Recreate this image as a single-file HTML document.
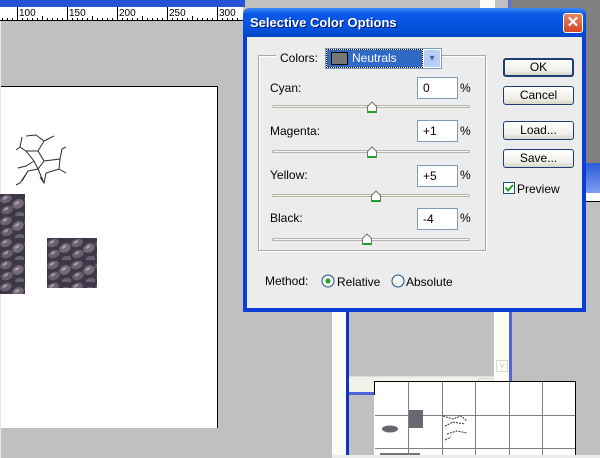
<!DOCTYPE html>
<html><head><style>
*{margin:0;padding:0;box-sizing:border-box}
body{width:600px;height:458px;overflow:hidden;background:#c0c0c0;position:relative;font-family:"Liberation Sans",Tahoma,sans-serif;font-size:12px;color:#000}
.a{position:absolute}
.btn{position:absolute;width:71px;height:19px;border:1px solid #1d3e74;border-radius:3px;background:linear-gradient(#fff,#f0efe8 70%,#d8d5c8);text-align:center;line-height:17px;font-size:12px}
.inp{position:absolute;width:41px;height:22px;border:1px solid #7f9db9;background:#fff;padding-left:5px;line-height:20px}
.trk{position:absolute;left:272px;width:198px;height:3px;border:1px solid #b5b4a8;background:#f4f3ee;border-radius:2px}
.lbl{position:absolute;font-size:12px}
</style></head><body>
<svg width="0" height="0" style="position:absolute"><defs>
<pattern id="cob" width="24" height="22" patternUnits="userSpaceOnUse">
<rect width="24" height="22" fill="#3c3848"/>
<ellipse cx="6" cy="5" rx="6" ry="4" fill="#6a6270" transform="rotate(-20 6 5)"/>
<ellipse cx="18" cy="10" rx="6" ry="4.5" fill="#736a75" transform="rotate(-25 18 10)"/>
<ellipse cx="7" cy="16" rx="6" ry="4" fill="#665e6a" transform="rotate(-20 7 16)"/>
<ellipse cx="20" cy="21" rx="5" ry="3" fill="#6a6270"/>
<ellipse cx="5" cy="4" rx="2.5" ry="1.2" fill="#a89ea8" transform="rotate(-30 5 4)"/>
<ellipse cx="17" cy="9" rx="2.5" ry="1.2" fill="#aca2ac" transform="rotate(-30 17 9)"/>
<ellipse cx="6" cy="15" rx="2.5" ry="1.2" fill="#a49aa4" transform="rotate(-30 6 15)"/>
</pattern></defs></svg>
<!-- top bar & ruler -->
<div class="a" style="left:0;top:0;width:245px;height:7px;background:#2453d6"></div>
<div class="a" style="left:480px;top:0;width:15px;height:8px;background:#fbfbf6"></div>
<div class="a" style="left:508px;top:0;width:3px;height:8px;background:#5a6fd8"></div>
<div class="a" style="left:511px;top:0;width:89px;height:163px;background:#808080"></div>
<div class="a" style="left:586px;top:163px;width:14px;height:30px;background:linear-gradient(#2a5bd8,#7f9ef0)"></div>
<div class="a" style="left:586px;top:193px;width:14px;height:9px;background:#fff;border-bottom:1px solid #000"></div>
<div class="a" style="left:0;top:7px;width:243px;height:14px;background:#fff;border-bottom:1px solid #000"></div>
<svg class="a" style="left:0;top:7px" width="243" height="14">
<g stroke="#000" stroke-width="1">
<path d="M17.5 0V14M67.5 0V14M117.5 0V14M167.5 0V14M217.5 0V14"/>
<path d="M2.5 11V14M7.5 11V14M12.5 11V14M22.5 11V14M27.5 11V14M32.5 11V14M37.5 11V14M42.5 9V14M47.5 11V14M52.5 11V14M57.5 11V14M62.5 11V14M72.5 11V14M77.5 11V14M82.5 11V14M87.5 11V14M92.5 9V14M97.5 11V14M102.5 11V14M107.5 11V14M112.5 11V14M122.5 11V14M127.5 11V14M132.5 11V14M137.5 11V14M142.5 9V14M147.5 11V14M152.5 11V14M157.5 11V14M162.5 11V14M172.5 11V14M177.5 11V14M182.5 11V14M187.5 11V14M192.5 9V14M197.5 11V14M202.5 11V14M207.5 11V14M212.5 11V14M222.5 11V14M227.5 11V14M232.5 11V14M237.5 11V14"/>
</g>
<g font-size="10" font-family="Liberation Sans,sans-serif"><text x="19" y="9">100</text><text x="69" y="9">150</text><text x="119" y="9">200</text><text x="169" y="9">250</text><text x="219" y="9">300</text></g>
</svg>
<!-- canvas -->
<div class="a" style="left:0;top:86px;width:218px;height:342px;background:#fff;border-top:1px solid #000;border-right:1px solid #000"></div>
<div class="a" style="left:0;top:21px;width:1px;height:437px;background:#e8e8e8"></div>
<svg class="a" style="left:14px;top:133px" width="52" height="56" fill="none" stroke="#2a2a3a" stroke-width="1">
<path d="M12 3L22 2L30 8L40 3M30 8L24 18L12 18L6 14M24 18L30 28L24 36L14 38L8 48M30 28L46 26L48 16L52 14M46 26L45 36L52 40M45 36L32 40L30 50L26 44M24 36L30 50M12 18L20 28L24 36M2 17L6 14L8 4M20 28L12 33L4 35M14 38L6 50L2 52"/>
</svg>
<svg class="a" style="left:0;top:194px" width="25" height="100"><rect width="25" height="100" fill="url(#cob)"/></svg>
<svg class="a" style="left:47px;top:238px" width="50" height="50"><rect width="50" height="50" fill="url(#cob)"/></svg>
<!-- window behind below dialog -->
<div class="a" style="left:332px;top:300px;width:14px;height:158px;background:#fcfcf6"></div>
<div class="a" style="left:346px;top:300px;width:3px;height:158px;background:#1030c8"></div>
<div class="a" style="left:349px;top:376px;width:160px;height:16px;background:#f3f2ea;border-top:1px solid #ddd"></div>
<div class="a" style="left:494px;top:300px;width:15px;height:92px;background:#fcfcf4"></div>
<div class="a" style="left:496px;top:360px;width:12px;height:12px;border:1px solid #d8d8d0;color:#ccc;font-size:8px;text-align:center;line-height:10px">∨</div>
<div class="a" style="left:478px;top:378px;width:15px;height:12px;border:1px solid #d8d8d0;color:#ccc;font-size:8px;text-align:center;line-height:10px">&gt;</div>
<div class="a" style="left:509px;top:300px;width:3px;height:95px;background:#5066d8"></div>
<div class="a" style="left:349px;top:392px;width:163px;height:3px;background:#5066d8"></div>
<div class="a" style="left:374px;top:381px;width:202px;height:77px;background:#fff;border:1px solid #000;border-bottom:none"></div>
<div class="a" style="left:374px;top:395px;width:135px;height:63px;background:#fff"></div>
<svg class="a" style="left:375px;top:382px" width="200" height="76" stroke="#808080">
<path d="M33.5 0V76M67.5 0V76M100.5 0V76M134.5 0V76M167.5 0V76M0 33.5H200M0 66.5H200"/>
<rect x="34" y="28" width="14" height="18" fill="#6b6670" stroke="none"/>
<ellipse cx="15" cy="47" rx="8" ry="3.5" fill="#6a6570" stroke="none"/>
<path d="M68 34l10 3 8-3 6 5M70 44l8-4 12 2M72 52l10-3 10 2M70 58l6-3" stroke="#333" fill="none" stroke-dasharray="2 1"/>
<rect x="5" y="71" width="40" height="5" fill="#777" stroke="none"/>
</svg>
<div class="a" style="left:332px;top:455px;width:268px;height:3px;background:#ececec"></div>
<!-- dialog -->
<div class="a" style="left:243px;top:8px;width:343px;height:304px;background:#0a3ed4;border-radius:7px 7px 0 0"></div>
<div class="a" style="left:243px;top:8px;width:343px;height:29px;border-radius:7px 7px 0 0;background:linear-gradient(#3d8cf4,#0a5ae8 20%,#0252dc 70%,#0646c8)"></div>
<div class="a" style="left:250px;top:15px;color:#fff;font-weight:bold;font-size:13px;text-shadow:1px 1px 0 #0a1a6a">Selective Color Options</div>
<div class="a" style="left:563px;top:13px;width:20px;height:20px;border:1px solid #fff;border-radius:3px;background:linear-gradient(#e6886a,#d4461f);color:#fff;text-align:center;font-weight:bold;font-size:15px;line-height:18px">✕</div>
<div class="a" style="left:247px;top:37px;width:335px;height:271px;background:#ececec"></div>
<div class="a" style="left:258px;top:55px;width:228px;height:196px;border:1px solid #a8a8a0;box-shadow:inset 1px 1px 0 #fff,1px 1px 0 #fff"></div>
<div class="a" style="left:276px;top:50px;width:48px;height:12px;background:#ececec"></div>
<div class="lbl" style="left:280px;top:51px">Colors:</div>
<div class="a" style="left:325px;top:48px;width:117px;height:21px;border:1px solid #7f9db9;background:#fff"></div>
<div class="a" style="left:327px;top:50px;width:95px;height:17px;background:#316ac5;outline:1px dotted #000"></div>
<div class="a" style="left:331px;top:52px;width:17px;height:13px;background:#777;border:1px solid #000"></div>
<div class="lbl" style="left:352px;top:51px;color:#fff">Neutrals</div>
<div class="a" style="left:424px;top:50px;width:16px;height:17px;background:#b9cdf8;border-radius:2px;color:#4d6185;font-size:10px;text-align:center;line-height:17px">▾</div>

<div class="lbl" style="left:270px;top:81px">Cyan:</div>
<div class="inp" style="left:417px;top:77px">0</div><div class="lbl" style="left:460px;top:81px">%</div>
<div class="trk" style="top:105px"></div>

<div class="lbl" style="left:270px;top:124px">Magenta:</div>
<div class="inp" style="left:417px;top:120px">+1</div><div class="lbl" style="left:460px;top:124px">%</div>
<div class="trk" style="top:150px"></div>

<div class="lbl" style="left:270px;top:168px">Yellow:</div>
<div class="inp" style="left:417px;top:165px">+5</div><div class="lbl" style="left:460px;top:168px">%</div>
<div class="trk" style="top:194px"></div>

<div class="lbl" style="left:270px;top:211px">Black:</div>
<div class="inp" style="left:417px;top:208px">-4</div><div class="lbl" style="left:460px;top:211px">%</div>
<div class="trk" style="top:238px"></div>

<svg class="a" style="left:0;top:0" width="600" height="458" pointer-events="none">
<g fill="#fff" stroke="#6a7a6a" stroke-width="1">
<path d="M367.5 112.5V106.5L372 102L376.5 106.5V112.5Z"/>
<path d="M367.5 157.5V151.5L372 147L376.5 151.5V157.5Z"/>
<path d="M371.5 201.5V195.5L376 191L380.5 195.5V201.5Z"/>
<path d="M362.5 244.5V238.5L367 234L371.5 238.5V244.5Z"/>
</g>
<g stroke="#21a121" stroke-width="2"><path d="M368 112H376M368 157H376M372 201H380M363 244H371"/></g>
<circle cx="328" cy="281" r="6" fill="#f4f4f0" stroke="#1c5180"/>
<circle cx="328" cy="281" r="2.5" fill="#21a121"/>
<circle cx="398" cy="281" r="6" fill="#f4f4f0" stroke="#1c5180"/>
<rect x="503.5" y="182.5" width="11" height="11" fill="#fff" stroke="#1c5180"/>
<path d="M505.5 187.5l2.5 3 5-5.5" stroke="#21a121" stroke-width="2" fill="none"/>
</svg>

<div class="btn" style="left:503px;top:58px;border-width:2px;line-height:15px">OK</div>
<div class="btn" style="left:503px;top:86px">Cancel</div>
<div class="btn" style="left:503px;top:121px">Load...</div>
<div class="btn" style="left:503px;top:149px">Save...</div>
<div class="lbl" style="left:517px;top:182px">Preview</div>

<div class="lbl" style="left:265px;top:274px">Method:</div>
<div class="lbl" style="left:337px;top:275px">Relative</div>
<div class="lbl" style="left:406px;top:275px">Absolute</div>
</body></html>
